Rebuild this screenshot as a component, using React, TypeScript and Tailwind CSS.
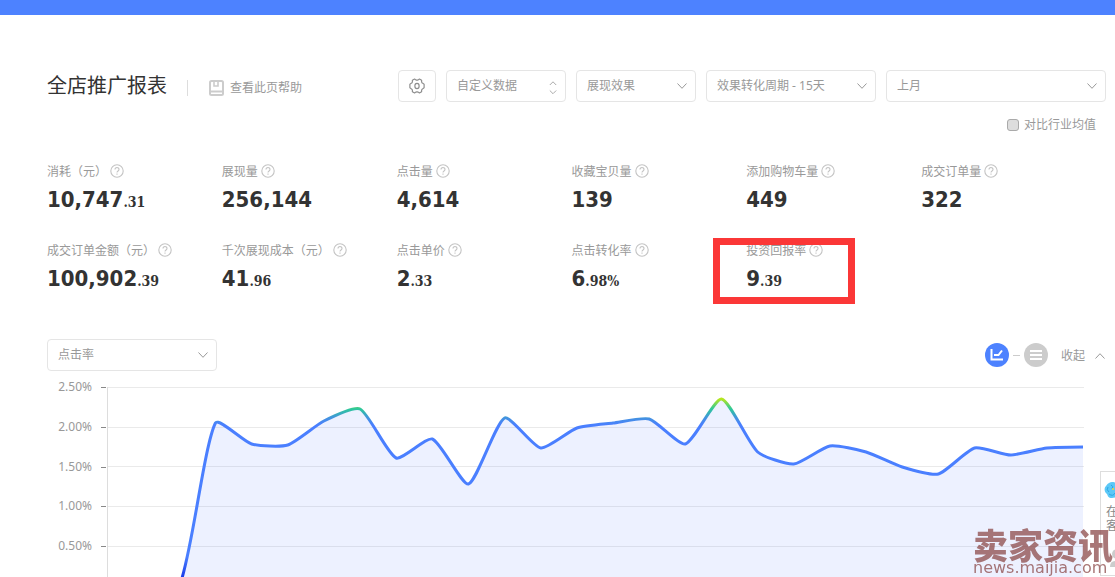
import React, { useState } from 'react';

interface Metric {
  label: string;
  value: string;
  decimal?: string;
  highlighted?: boolean;
}

interface DropdownProps {
  label: string;
  options: string[];
  className: string;
  stepper?: boolean;
}

const metrics: Metric[] = [
  { label: '消耗（元）', value: '10,747', decimal: '.31' },
  { label: '展现量', value: '256,144' },
  { label: '点击量', value: '4,614' },
  { label: '收藏宝贝量', value: '139' },
  { label: '添加购物车量', value: '449' },
  { label: '成交订单量', value: '322' },
  { label: '成交订单金额（元）', value: '100,902', decimal: '.39' },
  { label: '千次展现成本（元）', value: '41', decimal: '.96' },
  { label: '点击单价', value: '2', decimal: '.33' },
  { label: '点击转化率', value: '6', decimal: '.98%' },
  { label: '投资回报率', value: '9', decimal: '.39', highlighted: true },
];

const axisLabels = ['2.50%', '2.00%', '1.50%', '1.00%', '0.50%'];

// daily click rate, already in chart pixels from the 2.50% line
const clickRate = [
  199, 199, 199, 36, 57, 58, 34, 22, 71, 52, 97, 31, 61, 41, 36, 32, 57, 12, 65, 77, 59, 65, 80, 87, 61, 68, 61, 60,
];

const CHART_W = 976;
const CHART_H = 199;
const PLOT_W = 975;
const SMOOTH = 0.2;

type Point = [number, number];

const smoothPath = (pts: Point[]) => {
  const dist = (a: Point, b: Point) => Math.hypot(a[0] - b[0], a[1] - b[1]);
  // control point next to pts[i], longer towards the farther neighbour
  const control = (i: number, dir: 1 | -1): Point => {
    const p = pts[i];
    const to = pts[i + dir];
    const from = pts[i - dir];
    if (!from) return p;
    const ratio = dist(p, to) / (dist(p, to) + dist(p, from));
    return [p[0] + (to[0] - from[0]) * SMOOTH * ratio, p[1] + (to[1] - from[1]) * SMOOTH * ratio];
  };
  return pts
    .map((p, i) => (i === 0 ? `M${p.join(' ')}` : `C${control(i - 1, 1).join(' ')} ${control(i, -1).join(' ')} ${p.join(' ')}`))
    .join('');
};

const points: Point[] = clickRate.map((y, i) => [(i * PLOT_W) / (clickRate.length - 1), y]);
const linePath = smoothPath(points);

const Chevron = ({ up = false }: { up?: boolean }) => (
  <svg width="10" height="6" viewBox="0 0 10 6" fill="none" stroke="#999" className={up ? 'rotate-180' : ''}>
    <path d="M.5 .5 5 5.3 9.5 .5" />
  </svg>
);

const Dropdown: React.FC<DropdownProps> = ({ label, options, className, stepper }) => (
  <div className={`relative h-8 ${className}`}>
    <select
      aria-label={label}
      className="w-full h-full pl-[10px] pr-6 appearance-none bg-white border border-[#e5e5e5] rounded-[4px] text-xs text-[#999] outline-none"
    >
      {options.map(o => (
        <option key={o}>{o}</option>
      ))}
    </select>
    <div className="absolute inset-y-0 right-[9px] flex items-center pointer-events-none">
      {stepper ? (
        <svg width="8" height="14" viewBox="0 0 8 14" fill="none" stroke="#aaa" className="mt-1">
          <path d="M.8 4 4 .8 7.2 4M.8 9.5 4 12.7 7.2 9.5" />
        </svg>
      ) : (
        <Chevron />
      )}
    </div>
  </div>
);

const GearIcon = () => (
  <svg width="16" height="16" viewBox="0 0 18 18" fill="none" stroke="#8c8c8c" strokeWidth="1.3" strokeLinejoin="round">
    <path d="M6.3 1.2 7.6 2.1Q9 2.7 10.4 2.1L11.7 1.2 14.2 2.6 14.2 4.3Q14.4 5.5 15.5 6L17 6.9V11.1L15.5 12Q14.4 12.5 14.2 13.7L14.2 15.4 11.7 16.8 10.4 15.9Q9 15.3 7.6 15.9L6.3 16.8 3.8 15.4 3.8 13.7Q3.6 12.5 2.5 12L1 11.1V6.9L2.5 6Q3.6 5.5 3.8 4.3L3.8 2.6Z" />
    <ellipse cx="9" cy="9" rx="2.4" ry="3" />
  </svg>
);

const BookIcon = () => (
  <svg width="15" height="16" viewBox="0 0 15 16" fill="none" stroke="#ccc" strokeWidth="2">
    <rect x="1" y="1" width="13" height="14" rx="1.5" />
    <path d="M1 11.5H14" />
    <path d="M5 1V6H9V1" strokeWidth="1.6" />
  </svg>
);

const QuestionIcon = () => (
  <svg width="14" height="14" viewBox="0 0 14 14" fill="none" stroke="#c4c4c4" strokeWidth="1.1">
    <circle cx="7" cy="7" r="6.2" />
    <path d="M5 5.6C5 2.9 9 2.9 9 5.5 9 6.9 7 7 7 8.5M7 9.6V10.8" />
  </svg>
);

const MetricCell = ({ label, value, decimal, highlighted }: Metric) => (
  <div className="relative h-[79px]">
    <div className="flex items-center gap-[3px] h-5 text-xs text-[#999] whitespace-nowrap">
      <span className="pt-px">{label}</span>
      <QuestionIcon />
    </div>
    <p className="mt-[3px] h-8 leading-8 text-[22px] font-bold text-[#333] whitespace-nowrap [font-family:'DejaVu_Sans_Condensed','DejaVu_Sans',sans-serif]">
      {value}
      {decimal && (
        <span className="text-[14px] [font-family:'DejaVu_Serif_Condensed','DejaVu_Serif',serif]">{decimal}</span>
      )}
    </p>
    {highlighted && <div className="absolute -left-[33px] -top-[2px] w-[142px] h-[66px] border-[7px] border-[#fb3737]" />}
  </div>
);

const TrendChart = () => (
  <div className="flex mt-4 mr-[22px]">
    <div className="w-[60px] h-[199px] shrink-0 grid grid-rows-5">
      {axisLabels.map(t => (
        <div key={t} className="flex items-start justify-end pr-px">
          <span className="-mt-2 leading-4 text-xs text-[#999]">{t}</span>
          <span className="ml-[9px] w-[5px] h-px bg-[#888]" />
        </div>
      ))}
    </div>
    <svg
      className="flex-1 min-w-0 h-[199px] overflow-visible"
      viewBox={`0 0 ${CHART_W} ${CHART_H}`}
      preserveAspectRatio="none"
      fill="none"
    >
      <defs>
        <linearGradient id="rate" gradientUnits="userSpaceOnUse" x1="0" y1="0" x2="0" y2={CHART_H}>
          <stop offset="0.06" stopColor="#b6e61e" />
          <stop offset="0.11" stopColor="#2dc89a" />
          <stop offset="0.155" stopColor="#4393df" />
          <stop offset="0.19" stopColor="#4a7fff" />
          <stop offset="0.85" stopColor="#4a7fff" />
          <stop offset="0.97" stopColor="#1232e6" />
        </linearGradient>
      </defs>
      {axisLabels.map((t, i) => (
        <path key={t} d={`M0 ${Math.round(i * 39.7) + 0.5}H${CHART_W}`} stroke="#eaeaea" />
      ))}
      <path d={`${linePath}V${CHART_H}H0Z`} fill="#5078ff" fillOpacity="0.1" />
      <path d={`M.5 0V${CHART_H}`} stroke="#ddd" />
      <path d={linePath} stroke="url(#rate)" strokeWidth="3" strokeLinejoin="round" vectorEffect="non-scaling-stroke" />
    </svg>
  </div>
);

const ServiceWidget = () => (
  <aside className="fixed right-0 top-[471px] w-[15px] h-[105px] pl-[5px] pt-[10px] overflow-hidden bg-white border border-r-0 border-[#ddd] text-xs leading-[14px] text-[#888]">
    <svg width="17" height="16" viewBox="0 0 17 16" className="mb-[7px] max-w-none -ml-[2px]">
      <path d="M8 0C11 0 17 2 17 8S12 16 8 16 4 14 3 12C0 10 0 6 2 4 4 1 6 0 8 0Z" fill="#5bc8f7" />
      <path d="M4 5Q2 8 5 10M7 3Q10 4 8 7M5 12Q9 15 11 11" stroke="#2da5e4" fill="none" />
      <circle cx="9" cy="7" r="1" fill="#f2d43a" />
    </svg>
    <p className="w-6">在线</p>
    <p className="w-6">客服</p>
    <svg width="20" height="20" viewBox="0 0 20 20" fill="#ccc" className="mt-4 max-w-none">
      <circle cx="11" cy="5" r="5" />
      <path d="M4 18Q4 12 9 12H20V18Z" />
    </svg>
  </aside>
);

const Watermark = () => (
  <div className="fixed right-0 bottom-0 w-[142px] h-12 text-[#8c4a4a] opacity-75 pointer-events-none whitespace-nowrap">
    <p className="text-[35px] leading-[30px] font-black [font-family:'Noto_Sans_CJK_SC',sans-serif]">卖家资讯</p>
    <p className="text-[16px] leading-[18px] [font-family:'DejaVu_Sans',sans-serif]">news.maijia.com</p>
  </div>
);

const App: React.FC = () => {
  const [view, setView] = useState<'chart' | 'list'>('chart');
  const [compare, setCompare] = useState(false);

  return (
    <div className="h-screen overflow-hidden bg-white text-[#999] [font-family:'Noto_Sans','Noto_Sans_CJK_SC',sans-serif]">
      <div className="h-[15px] bg-[#4d82ff]" />

      <main className="pt-[55px] pl-[47px] pr-[9px]">
        {/* Title and filters */}
        <header className="flex items-center h-8">
          <h1 className="text-xl text-[#333]">全店推广报表</h1>
          <div className="ml-5 w-px h-4 mt-1 bg-[#ddd]" />
          <a href="#help" className="ml-[21px] mt-[3px] flex items-center gap-[6px] text-xs">
            <BookIcon />
            查看此页帮助
          </a>
          <div className="ml-auto flex gap-[10px]">
            <button aria-label="设置" className="w-[38px] h-8 flex items-center justify-center border border-[#e5e5e5] rounded-[4px]">
              <GearIcon />
            </button>
            <Dropdown label="数据" options={['自定义数据']} className="w-[120px]" stepper />
            <Dropdown label="效果" options={['展现效果', '点击效果']} className="w-[120px]" />
            <Dropdown label="转化周期" options={['效果转化周期 - 15天', '效果转化周期 - 7天']} className="w-[170px]" />
            <Dropdown label="日期" options={['上月', '本月']} className="w-[220px]" />
          </div>
        </header>

        <div className="flex justify-end mt-[14px] pr-[10px]">
          <label className="flex items-center gap-[5px] h-[18px] text-xs">
            <input
              type="checkbox"
              checked={compare}
              onChange={e => setCompare(e.target.checked)}
              className="w-3 h-3 appearance-none rounded-[3px] border border-[#aaa] bg-[#ddd] checked:bg-[#4d82ff]"
            />
            对比行业均值
          </label>
        </div>

        {/* Metrics */}
        <section className="grid grid-cols-6 mt-[27px] pr-[10px]">
          {metrics.map(m => (
            <MetricCell key={m.label} {...m} />
          ))}
        </section>

        {/* Chart toolbar */}
        <div className="flex items-center h-8 mt-5">
          <Dropdown label="指标" options={['点击率', '点击量']} className="w-[170px]" />
          <div className="ml-auto mr-px flex items-center">
            <button
              aria-label="图表"
              onClick={() => setView('chart')}
              className={`w-6 h-6 rounded-full flex items-center justify-center ${view === 'chart' ? 'bg-[#4d82ff]' : 'bg-[#ccc]'}`}
            >
              <svg width="14" height="12" viewBox="0 0 14 12" fill="none" stroke="#fff" strokeWidth="2">
                <path d="M1.5 0V10.5H13" />
                <path d="M4 6H8.5L12 1.5" />
              </svg>
            </button>
            <span className="mx-1 w-[7px] h-px bg-[#ccc]" />
            <button
              aria-label="列表"
              onClick={() => setView('list')}
              className={`w-6 h-6 rounded-full flex items-center justify-center ${view === 'list' ? 'bg-[#4d82ff]' : 'bg-[#ccc]'}`}
            >
              <svg width="12" height="10" viewBox="0 0 12 10" stroke="#fff" strokeWidth="2">
                <path d="M0 1H12M0 5H12M0 9H12" />
              </svg>
            </button>
            <button className="ml-[13px] pt-[2px] flex items-center gap-[10px] text-xs">
              收起
              <Chevron up />
            </button>
          </div>
        </div>

        <TrendChart />
      </main>

      <ServiceWidget />
      <Watermark />
    </div>
  );
};

export default App;
